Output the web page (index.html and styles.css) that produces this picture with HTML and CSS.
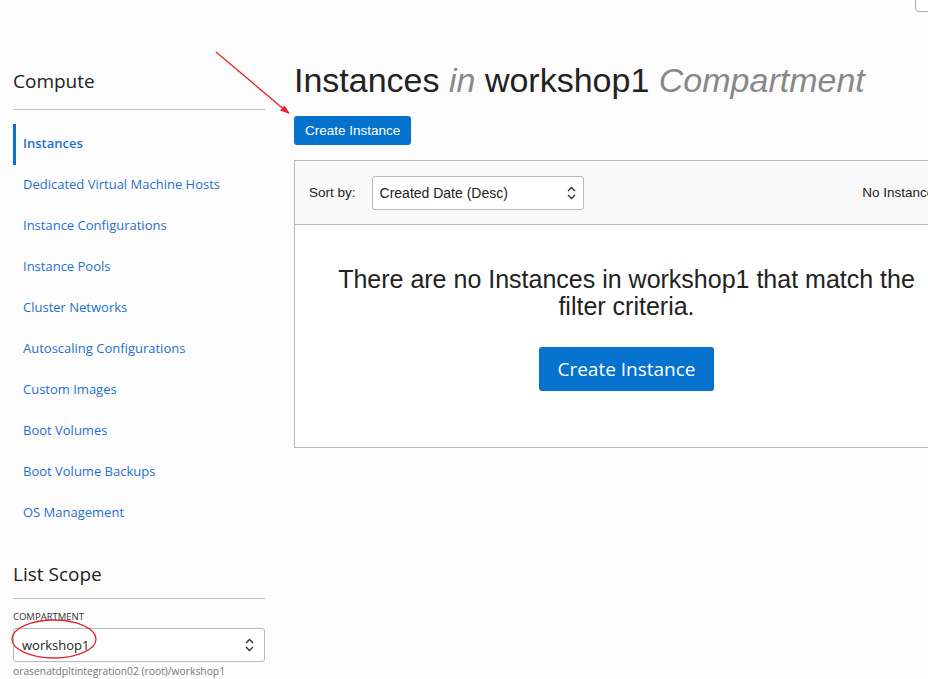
FILE: index.html
```html
<!DOCTYPE html>
<html lang="en">
<head>
<meta charset="utf-8">
<title>Instances</title>
<link rel="stylesheet" href="styles.css">
</head>
<body>
<div class="page">
  <aside class="sidebar">
    <h2 class="side-title">Compute</h2>
    <ul class="nav">
      <li class="nav-item active"><a>Instances</a></li>
      <li class="nav-item"><a>Dedicated Virtual Machine Hosts</a></li>
      <li class="nav-item"><a>Instance Configurations</a></li>
      <li class="nav-item"><a>Instance Pools</a></li>
      <li class="nav-item"><a>Cluster Networks</a></li>
      <li class="nav-item"><a>Autoscaling Configurations</a></li>
      <li class="nav-item"><a>Custom Images</a></li>
      <li class="nav-item"><a>Boot Volumes</a></li>
      <li class="nav-item"><a>Boot Volume Backups</a></li>
      <li class="nav-item"><a>OS Management</a></li>
    </ul>
    <h2 class="side-title scope">List Scope</h2>
    <div class="field-label">Compartment</div>
    <div class="select side-select">
      <span>workshop1</span>
      <svg class="chev" width="9" height="14" viewBox="0 0 9 14"><path d="M1 5 L4.5 1.5 L8 5 M1 9 L4.5 12.5 L8 9" fill="none" stroke="#333" stroke-width="1.4"/></svg>
    </div>
    <div class="field-help">orasenatdpltintegration02 (root)/workshop1</div>
  </aside>
  <main class="main">
    <h1 class="title">Instances <em>in</em> workshop1 <em>Compartment</em></h1>
    <button class="btn">Create Instance</button>
    <section class="panel">
      <div class="panel-head">
        <span class="sort-label">Sort by:</span>
        <div class="select sort-select">
          <span>Created Date (Desc)</span>
          <svg class="chev" width="9" height="14" viewBox="0 0 9 14"><path d="M1 5 L4.5 1.5 L8 5 M1 9 L4.5 12.5 L8 9" fill="none" stroke="#333" stroke-width="1.4"/></svg>
        </div>
        <span class="count">No Instances</span>
      </div>
      <div class="panel-body">
        <p class="empty">There are no Instances in workshop1 that match the filter criteria.</p>
        <button class="btn btn-lg">Create Instance</button>
      </div>
    </section>
  </main>
</div>
<div class="corner-box"></div>
<svg class="annot" width="928" height="679" viewBox="0 0 928 679">
  <line x1="216" y1="52" x2="286" y2="111" stroke="#e8232b" stroke-width="1.3"/>
  <path d="M290 114 L280 110.5 L284.5 105.5 Z" fill="#e8232b"/>
  <ellipse cx="54" cy="639" rx="42" ry="19" fill="none" stroke="#e8232b" stroke-width="1.3"/>
</svg>
</body>
</html>
```
FILE: styles.css
```css
* { box-sizing: border-box; }
html, body { margin: 0; padding: 0; }
body {
  background: #fcfcfd;
  width: 928px;
  height: 679px;
  overflow: hidden;
  position: relative;
  font-family: "Liberation Sans", Arial, sans-serif;
  color: #222;
}
.page {
  display: flex;
  align-items: flex-start;
}
.sidebar {
  width: 265px;
  padding-left: 13px;
  padding-top: 69px;
  flex: none;
}
.side-title {
  margin: 0;
  font-family: "Open Sans", sans-serif;
  font-weight: 400;
  font-size: 19px;
  line-height: 24px;
  color: #222;
  padding-bottom: 16px;
  border-bottom: 1px solid #c4c4cd;
}
.side-title.scope {
  margin-top: 28px;
  padding-bottom: 12px;
}
.nav {
  list-style: none;
  margin: 14px 0 0;
  padding: 0;
}
.nav-item {
  height: 41px;
  display: flex;
  align-items: center;
  padding-left: 7px;
  padding-bottom: 4px;
  border-left: 3px solid transparent;
  font-family: "Open Sans", sans-serif;
  font-size: 13px;
  color: #1f72cc;
}
.nav-item.active {
  border-left-color: #0a6fd0;
  font-weight: 600;
}
.field-label {
  margin-top: 12px;
  font-family: "Open Sans", sans-serif;
  font-size: 9.5px;
  line-height: 12px;
  text-transform: uppercase;
  color: #333;
}
.select {
  display: flex;
  align-items: center;
  justify-content: space-between;
  background: #fff;
  border: 1px solid #b3b8c2;
  border-radius: 3px;
}
.side-select {
  margin-top: 5px;
  height: 34px;
  padding: 0 10px 0 8px;
  font-family: "Open Sans", sans-serif;
  font-size: 13px;
  color: #222;
}
.field-help {
  margin-top: 3px;
  font-family: "Open Sans", sans-serif;
  font-size: 10.3px;
  line-height: 13px;
  color: #777;
  white-space: nowrap;
}
.main {
  margin-left: 29px;
  padding-top: 61px;
  width: 664px;
  flex: none;
}
.title {
  margin: 0;
  font-weight: 400;
  font-size: 34px;
  line-height: 38px;
  color: #222;
  white-space: nowrap;
}
.title em {
  color: #888;
}
.btn {
  display: block;
  margin-top: 17px;
  height: 29px;
  padding: 0 11px;
  border: none;
  border-radius: 3px;
  background: #0572ce;
  color: #fff;
  font-family: "Liberation Sans", Arial, sans-serif;
  font-size: 13.5px;
}
.panel {
  margin-top: 15px;
  border: 1px solid #b3b8c2;
  border-right: none;
  background: #fff;
}
.panel-head {
  height: 64px;
  display: flex;
  align-items: center;
  padding: 0 14px;
  background: #f9f9fa;
  border-bottom: 1px solid #b3b8c2;
  font-size: 13.5px;
  color: #222;
}
.sort-label {
  margin-right: 16px;
}
.sort-select {
  width: 212px;
  height: 34px;
  padding: 0 7px;
  font-size: 14px;
}
.count {
  margin-left: auto;
  white-space: nowrap;
  padding-right: 3px;
}
.panel-body {
  padding: 41px 20px 56px;
  display: flex;
  flex-direction: column;
  align-items: center;
}
.empty {
  margin: 0;
  font-size: 25px;
  line-height: 27px;
  text-align: center;
  color: #222;
  max-width: 620px;
}
.btn-lg {
  margin-top: 27px;
  height: 44px;
  padding: 0 18px;
  font-family: "Open Sans", sans-serif;
  font-size: 19px;
}
.corner-box {
  position: absolute;
  top: -4px;
  left: 915px;
  width: 30px;
  height: 16px;
  background: #fff;
  border: 1px solid #aab;
  border-radius: 4px;
}
.annot {
  position: absolute;
  left: 0;
  top: 0;
  pointer-events: none;
}
```
